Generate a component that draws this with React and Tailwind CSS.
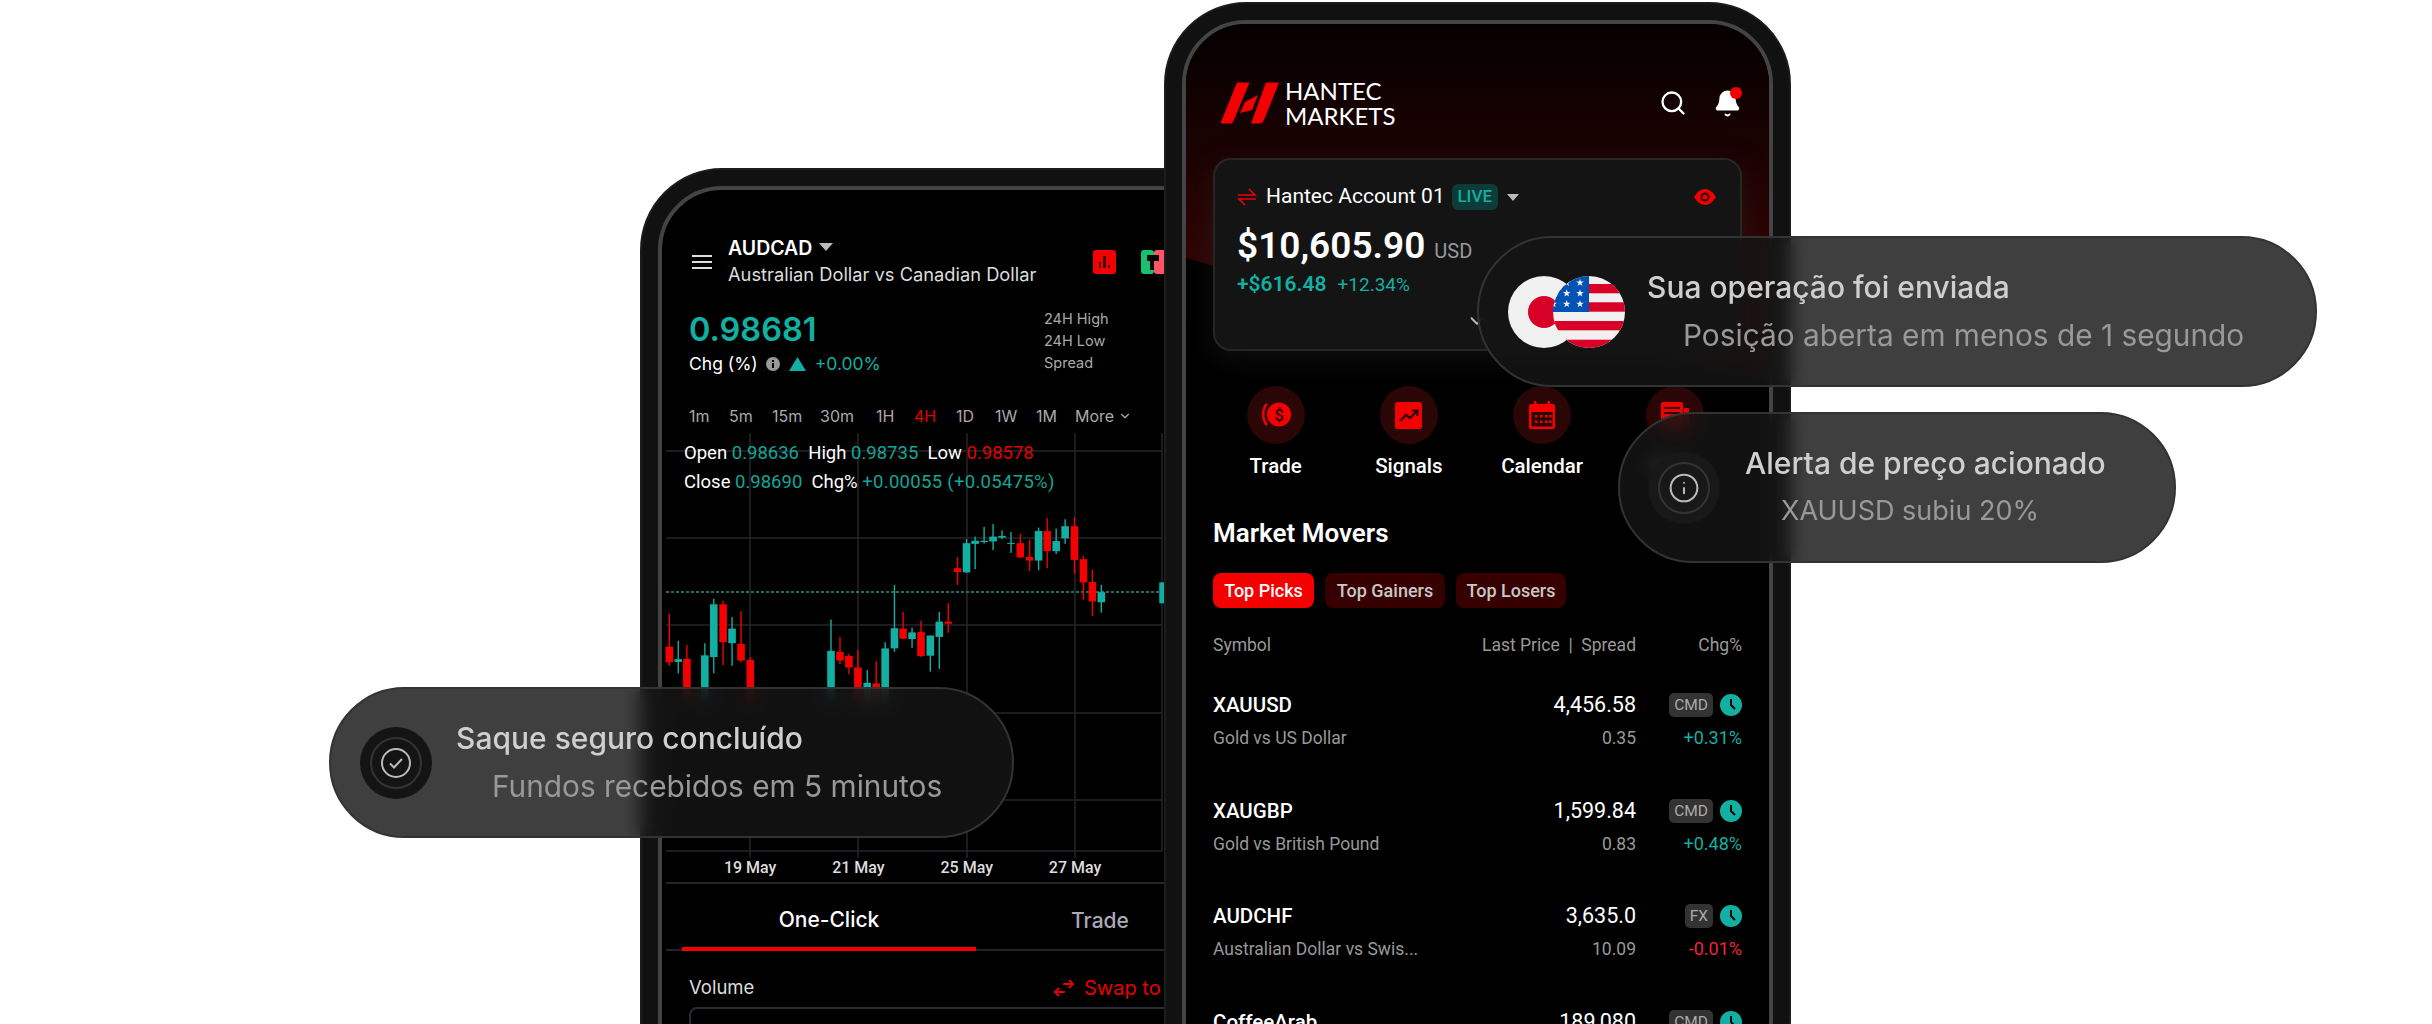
import React from 'react';
import { Search, Bell, Info, ChevronDown } from 'lucide-react';

const TIMEFRAMES = [
  { label: '1m', w: 'w-[40px]' },
  { label: '5m', w: 'w-[43px]' },
  { label: '15m', w: 'w-[48px]' },
  { label: '30m', w: 'w-[56px]' },
  { label: '1H', w: 'w-[38px]' },
  { label: '4H', w: 'w-[42px]', active: true },
  { label: '1D', w: 'w-[39px]' },
  { label: '1W', w: 'w-[41px]' },
  { label: '1M', w: 'w-[39px]' },
];

// x, wick top, wick bottom, body top, body bottom, up
const CANDLES = [
  [85, 385, 535, 480, 525, 0], [111, 463, 557, 516, 524, 1], [136, 475, 640, 515, 640, 0],
  [188, 470, 640, 505, 640, 1], [214, 342, 557, 358, 510, 1], [241, 348, 533, 358, 467, 0],
  [267, 395, 535, 428, 470, 1], [293, 378, 525, 472, 520, 0], [320, 510, 640, 518, 640, 0],
  [554, 402, 640, 492, 640, 1], [580, 452, 530, 495, 520, 0], [606, 500, 560, 507, 540, 0],
  [632, 490, 640, 540, 640, 0], [659, 547, 640, 584, 640, 1], [685, 522, 640, 586, 640, 0],
  [711, 467, 640, 485, 640, 1], [738, 302, 495, 427, 485, 1], [763, 380, 458, 428, 457, 0],
  [789, 425, 483, 439, 458, 1], [815, 405, 510, 438, 507, 0], [842, 448, 552, 448, 506, 1],
  [868, 380, 544, 408, 452, 1], [894, 355, 440, 408, 414, 0], [921, 222, 302, 254, 265, 0],
  [947, 170, 268, 182, 266, 1], [972, 163, 257, 175, 184, 1], [998, 135, 183, 175, 179, 1],
  [1024, 127, 202, 163, 177, 1], [1050, 145, 170, 161, 166, 1], [1076, 150, 210, 181, 184, 1],
  [1103, 155, 225, 182, 223, 0], [1130, 172, 262, 222, 232, 0], [1156, 137, 260, 147, 232, 1],
  [1181, 110, 254, 147, 205, 0], [1207, 140, 213, 176, 205, 1], [1233, 113, 184, 133, 168, 1],
  [1260, 107, 270, 133, 230, 0], [1286, 218, 345, 228, 295, 0], [1312, 258, 392, 294, 350, 0],
  [1338, 302, 382, 323, 352, 1], [1517, 295, 355, 295, 355, 1],
];

const MOVERS = [
  { symbol: 'XAUUSD', name: 'Gold vs US Dollar', price: '4,456.58', spread: '0.35', tag: 'CMD', chg: '+0.31%', up: true },
  { symbol: 'XAUGBP', name: 'Gold vs British Pound', price: '1,599.84', spread: '0.83', tag: 'CMD', chg: '+0.48%', up: true },
  { symbol: 'AUDCHF', name: 'Australian Dollar vs Swis...', price: '3,635.0', spread: '10.09', tag: 'FX', chg: '-0.01%', up: false },
  { symbol: 'CoffeeArab', name: '', price: '189,080', spread: '', tag: 'CMD', chg: '', up: true },
];

function Chart() {
  const v = [88, 196, 305, 413];
  const h = [18, 105, 192, 280, 367, 418];
  return (
    <svg width="502" height="425" viewBox="0 0 502 425" className="block">
      {v.map(x => <line key={x} x1={x} x2={x} y1="0" y2="425" stroke="#24242c" strokeWidth="1.5" />)}
      <line x1="500" x2="500" y1="0" y2="418" stroke="#24242c" strokeWidth="1.5" />
      {h.map(y => <line key={y} x1="4" x2="500" y1={y} y2={y} stroke="#24242c" strokeWidth="1.5" />)}
      <line x1="4" x2="500" y1="159" y2="159" stroke="#2a9187" strokeWidth="1.5" strokeDasharray="3 2" />
      <g transform="translate(-22 47) scale(0.3448 0.3472)">
        {CANDLES.map(([x, wt, wb, bt, bb, up]) => (
          <g key={x} fill={up ? '#12b0a2' : '#f50000'}>
            <rect x={x - 2} y={wt} width="4" height={wb - wt} />
            <rect x={x - 11} y={bt} width="22" height={bb - bt} />
          </g>
        ))}
      </g>
    </svg>
  );
}

function LeftPhone() {
  return (
    <div className="w-[627px] h-[1100px] shrink-0 rounded-[82px] bg-[#111] border-2 border-[#1c1c1c] p-[16px]">
      <div className="h-full rounded-[64px] border-4 border-[#444] bg-black overflow-hidden font-['Inter',sans-serif] text-white">
        {/* Header */}
        <div className="flex items-center pt-[46px] pl-[30px]">
          <div className="w-[20px] flex flex-col gap-[4px] mr-[16px]">
            <span className="h-[2px] bg-[#ddd]" />
            <span className="h-[2px] bg-[#ddd]" />
            <span className="h-[2px] bg-[#ddd]" />
          </div>
          <div className="w-[365px]">
            <div className="flex items-center h-[26px] text-[19.500px] font-semibold">
              AUDCAD
              <svg width="16" height="10" viewBox="0 0 16 10" className="ml-[6px] mb-[4px]"><path d="M1 1h14L8 9z" fill="#bbb" /></svg>
            </div>
            <div className="h-[25px] leading-[25px] text-[18.300px] text-[#ddd] whitespace-nowrap">Australian Dollar vs Canadian Dollar</div>
          </div>
          <div className="w-[23px] h-[24px] rounded-[3px] bg-[#f50000] flex items-end justify-center gap-[2px] pb-[6px]">
            <span className="w-[2.5px] h-[6px] bg-[#400]" />
            <span className="w-[2.5px] h-[12px] bg-[#400]" />
            <span className="w-[2.5px] h-[3px] bg-[#400]" />
          </div>
          <svg width="26" height="24" viewBox="0 0 26 24" className="ml-[25px]">
            <rect width="13" height="24" rx="3" fill="#16c172" />
            <rect x="13" width="13" height="24" rx="3" fill="#ff5566" />
            <rect x="6" y="5" width="12" height="6" fill="#000" />
            <rect x="9" y="11" width="4" height="9" fill="#000" />
          </svg>
        </div>

        {/* Price */}
        <div className="flex mt-[21px] pl-[27px]">
          <div className="w-[355px]">
            <div className="h-[44px] leading-[44px] text-[32.500px] font-semibold text-[#12b0a2]">0.98681</div>
            <div className="h-[24px] flex items-center text-[17.500px]">
              <span>Chg (%)</span>
              <svg width="14" height="14" viewBox="0 0 14 14" className="ml-[8px]">
                <circle cx="7" cy="7" r="7" fill="#999" />
                <rect x="6" y="6" width="2" height="5" fill="#000" />
                <rect x="6" y="3" width="2" height="2" fill="#000" />
              </svg>
              <svg width="17" height="14" viewBox="0 0 17 14" className="ml-[9px]"><path d="M8.500 0 17 14H0z" fill="#12b0a2" /></svg>
              <span className="ml-[9px] text-[#12b0a2]">+0.00%</span>
            </div>
          </div>
          <div className="text-[14.500px] leading-[22px] text-[#aaa]">
            <div>24H High</div>
            <div>24H Low</div>
            <div>Spread</div>
          </div>
        </div>

        {/* Timeframes */}
        <div className="flex items-center h-[24px] mt-[28px] pl-[27px] text-[16px] text-[#aaa]">
          {TIMEFRAMES.map(t => (
            <span key={t.label} className={`${t.w} ${t.active ? 'text-[#e00000]' : ''}`}>{t.label}</span>
          ))}
          <span>More</span>
          <ChevronDown className="w-[14px] h-[14px] ml-[4px]" />
        </div>

        {/* Chart */}
        <div className="relative mt-[5px]">
          <Chart />
          <div className="absolute left-[22px] top-[6px] font-['Roboto',sans-serif] text-[18.500px] leading-[29px] whitespace-nowrap">
            <div>
              Open <span className="text-[#12a598]">0.98636</span>&nbsp; High <span className="text-[#12a598]">0.98735</span>&nbsp; Low <span className="text-[#e00000]">0.98578</span>
            </div>
            <div>
              Close <span className="text-[#12a598]">0.98690</span>&nbsp; Chg% <span className="text-[#12a598] tracking-[0.3px]">+0.00055 (+0.05475%)</span>
            </div>
          </div>
        </div>

        {/* Axis */}
        <div className="flex items-start h-[26px] ml-[4px] pl-[30px] border-b-2 border-[#24242c] font-['Roboto',sans-serif] font-medium text-[16px] text-[#ddd] leading-[20px]">
          {['19 May', '21 May', '25 May', '27 May'].map(d => (
            <span key={d} className="w-[108.300px] text-center">{d}</span>
          ))}
        </div>

        {/* Tabs */}
        <div className="flex h-[67px] ml-[4px] pl-[16px] border-b-2 border-[#24242c] text-[21px] font-medium">
          <div className="w-[294px] h-[67px] border-b-4 border-[#f50000] flex items-center justify-center pt-[8px]">One-Click</div>
          <div className="w-[248px] h-[65px] flex items-center justify-center pt-[8px] text-[#aab]">Trade</div>
        </div>

        {/* Volume */}
        <div className="flex items-center h-[24px] mt-[25px] pl-[27px] text-[18.500px]">
          <span className="w-[364px] text-[#ddd]">Volume</span>
          <svg width="22" height="18" viewBox="0 0 22 18" fill="none" stroke="#e80000" strokeWidth="2">
            <path d="M2 13h10M6 9l-4 4 4 4M20 5H10M16 1l4 4-4 4" />
          </svg>
          <span className="ml-[9px] text-[20px] text-[#e80000] whitespace-nowrap">Swap to</span>
        </div>
        <div className="mt-[7px] ml-[27px] h-[100px] rounded-[8px] border-2 border-[#2a2a32]" />
      </div>
    </div>
  );
}

function HantecLogo() {
  return (
    <div className="flex items-center ml-[8px]">
      <svg width="58" height="42" viewBox="0 0 58 42" fill="#f50000">
        <path d="M16 0.500h12.500L12 40a3 3 0 0 1-3 1.500H1a1 1 0 0 1-1-1.500z" />
        <path d="M45 0.500h13L43 38a5 5 0 0 1-4 3.500H30z" />
        <path d="M24 20l13-7-6 15-12 3z" />
      </svg>
      <div className="ml-[6px] font-['Lato',sans-serif] font-normal text-[24px] leading-[25px] text-white">
        <div>HANTEC</div>
        <div>MARKETS</div>
      </div>
    </div>
  );
}

function TradeIcon() {
  return (
    <svg width="32" height="28" viewBox="0 0 32 28">
      <path d="M7 3C2 7 2 19 7 24" fill="none" stroke="#f50000" strokeWidth="2.500" />
      <circle cx="19" cy="13.500" r="12" fill="#f50000" />
      <text x="19" y="19.500" textAnchor="middle" fontSize="17" fontWeight="500" fill="#2a0606" fontFamily="Roboto, sans-serif">$</text>
    </svg>
  );
}

function SignalsIcon() {
  return (
    <svg width="27" height="27" viewBox="0 0 27 27">
      <rect width="27" height="27" rx="2.500" fill="#f50000" />
      <path d="M5 19l6-6 4 3 7-7M17 8.500h5.500V14" fill="none" stroke="#2a0606" strokeWidth="2.200" />
    </svg>
  );
}

function CalendarIcon() {
  return (
    <svg width="26" height="28" viewBox="0 0 26 28" fill="#f50000">
      <rect x="5" y="0" width="2.500" height="5" />
      <rect x="18.500" y="0" width="2.500" height="5" />
      <path d="M2 3h22a2 2 0 0 1 2 2v21a2 2 0 0 1-2 2H2a2 2 0 0 1-2-2V5a2 2 0 0 1 2-2z" />
      <rect x="2.500" y="11" width="21" height="14.500" fill="#2a0606" />
      {[6, 11, 16, 20].map(x => <rect key={x} x={x} y="14" width="2.500" height="2.500" />)}
      {[6, 11, 16, 20].map(x => <rect key={x} x={x} y="19.500" width="2.500" height="2.500" />)}
    </svg>
  );
}

function NewsIcon() {
  return (
    <svg width="28" height="26" viewBox="0 0 28 26" fill="#f50000">
      <rect width="22" height="26" rx="2" />
      <rect x="23" y="6" width="5" height="20" rx="1" />
      <rect x="3" y="5" width="16" height="2" fill="#2a0606" />
      <rect x="3" y="10" width="16" height="2" fill="#2a0606" />
    </svg>
  );
}

function EyeIcon() {
  return (
    <svg width="22" height="16" viewBox="0 0 22 16" className="ml-auto">
      <path d="M0 8C3 3 7 0 11 0s8 3 11 8c-3 5-7 8-11 8S3 13 0 8z" fill="#f00000" />
      <circle cx="11" cy="8" r="4.500" fill="#300" />
      <circle cx="11" cy="8" r="2.500" fill="#f00000" />
    </svg>
  );
}

const SHORTCUTS = [
  { label: 'Trade', icon: <TradeIcon /> },
  { label: 'Signals', icon: <SignalsIcon /> },
  { label: 'Calendar', icon: <CalendarIcon /> },
  { label: 'News', icon: <NewsIcon /> },
];

function RightPhone() {
  return (
    <div className="relative z-10 w-[627px] h-[1100px] shrink-0 mt-[2px] -ml-[103px] rounded-[82px] bg-[#111] border-2 border-[#1c1c1c] p-[16px]">
      <div className="relative h-full rounded-[64px] border-4 border-[#444] bg-black overflow-hidden font-['Roboto',sans-serif] text-white">
        {/* red glow behind the header */}
        <div className="absolute inset-x-0 top-0 h-[400px] bg-[linear-gradient(180deg,#050000_0%,#1a0202_30%,#360404_65%)] [clip-path:polygon(0_0,100%_0,100%_350px,28px_242px,0_234px)]" />

        <div className="relative px-[27px] pt-[58px]">
          <div className="flex items-center h-[42px]">
            <HantecLogo />
            <Search className="ml-auto w-[28px] h-[28px]" strokeWidth={2} />
            <div className="relative ml-[26px]">
              <Bell className="w-[29px] h-[29px] fill-white" strokeWidth={1.500} />
              <span className="absolute -top-[2px] right-0 w-[12px] h-[12px] rounded-full bg-[#f50000]" />
            </div>
          </div>

          {/* Account card */}
          <div className="mt-[34px] h-[193px] rounded-[18px] border-2 border-[#262626] bg-[#141414] pl-[22px] pr-[24px] pt-[23px] shadow-[0_8px_30px_rgba(40,40,40,0.4)]">
            <div className="flex items-center h-[26px] translate-y-[1px]">
              <svg width="20" height="20" viewBox="0 0 20 20" fill="none" stroke="#f00000" strokeWidth="1.600">
                <path d="M1 8h17l-6-6M19 12H2l6 6" />
              </svg>
              <span className="ml-[9px] text-[21px]">Hantec Account 01</span>
              <span className="ml-[7px] h-[26px] w-[46px] rounded-[6px] bg-[#0c3b38] text-[#12b0a2] text-[17px] font-medium flex items-center justify-center">LIVE</span>
              <svg width="14" height="9" viewBox="0 0 14 9" className="ml-[8px]"><path d="M1 1h12L7 8z" fill="#bbb" /></svg>
              <EyeIcon />
            </div>
            <div className="flex items-baseline h-[44px] mt-[15px] leading-[44px]">
              <span className="text-[37px] font-semibold">$10,605.90</span>
              <span className="ml-[9px] text-[20px] text-[#999]">USD</span>
            </div>
            <div className="flex items-baseline h-[24px] mt-[4px] leading-[24px] text-[#12b0a2]">
              <span className="text-[21px] font-semibold">+$616.48</span>
              <span className="ml-[11px] text-[19px]">+12.34%</span>
            </div>
            <div className="flex justify-center mt-[14px]">
              <ChevronDown className="w-[22px] h-[22px] text-[#bbb]" />
            </div>
          </div>

          {/* Shortcuts */}
          <div className="flex mt-[35px] -ml-[4px]">
            {SHORTCUTS.map(s => (
              <div key={s.label} className="w-[135px] flex flex-col items-center">
                <div className="w-[58px] h-[58px] rounded-full bg-[#2a0606] flex items-center justify-center">{s.icon}</div>
                <div className="mt-[9px] text-[20.500px] font-medium leading-[26px]">{s.label}</div>
              </div>
            ))}
          </div>

          <h2 className="mt-[36px] h-[36px] leading-[36px] text-[26px] font-semibold">Market Movers</h2>

          <div className="flex gap-[11px] mt-[22px] text-[18px] font-medium">
            <span className="w-[101px] h-[35px] rounded-[8px] bg-[#f50000] flex items-center justify-center">Top Picks</span>
            <span className="w-[120px] h-[35px] rounded-[8px] bg-[#360000] text-[#c8c8c8] flex items-center justify-center">Top Gainers</span>
            <span className="w-[110px] h-[35px] rounded-[8px] bg-[#360000] text-[#c8c8c8] flex items-center justify-center">Top Losers</span>
          </div>

          <div className="grid grid-cols-[1fr_auto_106px] h-[24px] mt-[25px] leading-[24px] text-[17.500px] text-[#999]">
            <span>Symbol</span>
            <span>Last Price&nbsp; |&nbsp; Spread</span>
            <span className="text-right">Chg%</span>
          </div>

          {/* Rows */}
          <div className="mt-[36px]">
            {MOVERS.map(m => (
              <div key={m.symbol} className="grid grid-cols-[1fr_auto_106px] h-[105.500px]">
                <div>
                  <div className="h-[24px] leading-[24px] text-[20.500px] font-medium">{m.symbol}</div>
                  <div className="mt-[9px] h-[24px] leading-[24px] text-[17.500px] text-[#999]">{m.name}</div>
                </div>
                <div className="text-right">
                  <div className="h-[24px] leading-[24px] text-[21.500px]">{m.price}</div>
                  <div className="mt-[9px] h-[24px] leading-[24px] text-[17.500px] text-[#999]">{m.spread}</div>
                </div>
                <div className="text-right">
                  <div className="flex items-center justify-end h-[24px]">
                    <span className="h-[24px] px-[5px] rounded-[5px] bg-[#333] text-[#aaa] text-[15.500px] leading-[24px]">{m.tag}</span>
                    <svg width="22" height="22" viewBox="0 0 22 22" className="ml-[7px]">
                      <circle cx="11" cy="11" r="11" fill="#12b0a2" />
                      <path d="M11 5v6l4 4" fill="none" stroke="#000" strokeWidth="2" />
                    </svg>
                  </div>
                  <div className={`mt-[9px] h-[24px] leading-[24px] text-[18px] ${m.up ? 'text-[#12b0a2]' : 'text-[#f0213d]'}`}>{m.chg}</div>
                </div>
              </div>
            ))}
          </div>
        </div>
      </div>
    </div>
  );
}

function Star({ x, y }) {
  const pts = [];
  for (let i = 0; i < 10; i++) {
    const r = i % 2 ? 1.600 : 4;
    const a = (Math.PI / 5) * i - Math.PI / 2;
    pts.push(`${(x + r * Math.cos(a)).toFixed(2)},${(y + r * Math.sin(a)).toFixed(2)}`);
  }
  return <polygon points={pts.join(' ')} fill="#f0f0f0" />;
}

function Flags() {
  return (
    <svg width="117" height="72" viewBox="0 0 117 72" className="shrink-0">
      <defs>
        <clipPath id="us-flag"><circle cx="81" cy="36" r="36" /></clipPath>
      </defs>
      <circle cx="36" cy="36" r="36" fill="#f0f0f0" />
      <circle cx="36" cy="36" r="16" fill="#d80027" />
      <g clipPath="url(#us-flag)">
        <rect x="45" width="72" height="72" fill="#f0f0f0" />
        <rect x="45" y="8" width="72" height="9.300" fill="#d80027" />
        <rect x="45" y="26.300" width="72" height="9.400" fill="#d80027" />
        <rect x="45" y="45" width="72" height="9.300" fill="#d80027" />
        <rect x="45" y="63.700" width="72" height="8.300" fill="#d80027" />
        <rect x="45" width="36" height="36" fill="#0052b4" />
        <Star x={72} y={6.700} /><Star x={58.700} y={6.700} />
        <Star x={58.700} y={17.300} /><Star x={72} y={17.300} />
        <Star x={45.300} y={28} /><Star x={58.700} y={28} /><Star x={72} y={28} />
      </g>
    </svg>
  );
}

function RingIcon({ bg, ring, children }) {
  return (
    <div className={`w-[72px] h-[72px] shrink-0 rounded-full flex items-center justify-center ${bg}`}>
      <div className={`w-[52px] h-[52px] rounded-full border-2 flex items-center justify-center ${ring}`}>{children}</div>
    </div>
  );
}

function Toast({ pos, pad, gap, title, sub, subSize, icon }) {
  return (
    <div className={`absolute z-20 h-[151px] rounded-full border-2 border-[#333] bg-[#151515]/82 backdrop-blur-[9px] flex items-center font-['Inter',sans-serif] ${pos} ${pad}`}>
      {icon}
      <div className={`whitespace-nowrap mb-[2px] ${gap}`}>
        <div className="h-[40px] leading-[40px] text-[30px] font-medium text-[#cfcfcf]">{title}</div>
        <div className={`mt-[8px] ml-[36px] h-[40px] leading-[40px] text-[#999] ${subSize}`}>{sub}</div>
      </div>
    </div>
  );
}

export default function App() {
  return (
    <div className="relative w-[2432px] h-[1024px] overflow-hidden bg-white flex items-start pl-[640px]">
      <div className="mt-[168px]"><LeftPhone /></div>
      <RightPhone />

      <Toast
        pos="left-[1477px] top-[236px] w-[840px]"
        pad="pl-[29px]"
        gap="ml-[22px]"
        icon={<Flags />}
        title="Sua operação foi enviada"
        sub="Posição aberta em menos de 1 segundo"
        subSize="text-[29.800px]"
      />
      <Toast
        pos="left-[1618px] top-[412px] w-[558px]"
        pad="pl-[28px]"
        gap="ml-[25px]"
        icon={
          <RingIcon bg="bg-[#181818]" ring="border-[#333]">
            <Info className="w-[32px] h-[32px] text-[#bbb]" strokeWidth={1.500} />
          </RingIcon>
        }
        title="Alerta de preço acionado"
        sub="XAUUSD subiu 20%"
        subSize="text-[27px]"
      />
      <Toast
        pos="left-[329px] top-[687px] w-[685px]"
        pad="pl-[29px]"
        gap="ml-[24px]"
        icon={
          <RingIcon bg="bg-[#141414]" ring="border-[#333]">
            <svg width="32" height="32" viewBox="0 0 32 32" fill="none" stroke="#bbb" strokeWidth="2">
              <circle cx="16" cy="16" r="14" />
              <path d="M10 16.500l4 4 8-8.500" />
            </svg>
          </RingIcon>
        }
        title="Saque seguro concluído"
        sub="Fundos recebidos em 5 minutos"
        subSize="text-[29.800px]"
      />
    </div>
  );
}
